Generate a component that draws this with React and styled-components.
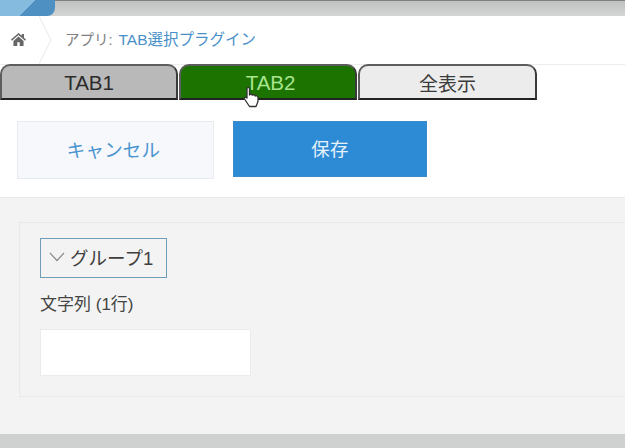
import React from "react";
import styled, { createGlobalStyle } from "styled-components";

const GlobalStyle = createGlobalStyle`
  html, body { margin: 0; padding: 0; background: #fff; }
  body { font-family: "Liberation Sans", "Noto Sans CJK JP", sans-serif; overflow: hidden; }
`;

const Page = styled.div`
  width: 625px;
  height: 448px;
  display: flex;
  flex-direction: column;
  overflow: hidden;
`;

const TopBar = styled.div`
  position: relative;
  height: 15px;
  flex: none;
  border-top: 1px solid #7c7f7f;
  background: linear-gradient(#bfc1c1, #d4d5d5);
`;

const Logo = styled.div`
  position: absolute;
  left: 0;
  top: -1px;
  width: 55px;
  height: 16px;
  border-radius: 0 0 8px 0;
  background: linear-gradient(135deg, #86bbe0 0 50%, #4f90c2 50% 100%);
`;

const Breadcrumb = styled.div`
  height: 49px;
  flex: none;
  display: flex;
  align-items: center;
  background: #fff;
  border-bottom: 1px solid #eceded;
  box-sizing: border-box;
`;

const HomeCell = styled.div`
  width: 39px;
  height: 100%;
  flex: none;
  display: flex;
  align-items: center;
  padding: 0 0 2px 11px;
  box-sizing: border-box;
`;

const Crumb = styled.svg`
  width: 14px;
  height: 48px;
  flex: none;
  margin-right: 12px;
`;

const AppLabel = styled.span`
  font-size: 14.5px;
  color: #808080;
  margin: 0 6px 4px 0;
`;

const AppLink = styled.span`
  font-size: 15.5px;
  color: #4a90c8;
  margin-bottom: 4px;
`;

const TabRow = styled.div`
  height: 36px;
  flex: none;
  display: flex;
  position: relative;
  margin-top: -1px;
`;

const Tab = styled.div`
  position: relative;
  width: ${(p) => p.$width}px;
  box-sizing: border-box;
  display: flex;
  align-items: center;
  justify-content: center;
  margin-left: ${(p) => p.$gap || 0}px;
  padding: 1px 0 0 ${(p) => p.$indent || 0}px;
  border: 2px solid #5d5d5d;
  border-bottom: 2px solid #222;
  border-right-color: #3a3a3a;
  border-radius: 10px 10px 0 0;
  background: ${(p) => p.$bg};
  color: ${(p) => p.$color};
  font-size: ${(p) => p.$size || 20.5}px;
`;

const Cursor = styled.svg`
  position: absolute;
  left: 62px;
  top: 20px;
  width: 18px;
  height: 22px;
`;

const Toolbar = styled.div`
  height: 97px;
  flex: none;
  display: flex;
  align-items: flex-start;
  gap: 19px;
  padding: 21px 0 0 17px;
  box-sizing: border-box;
  background: #fff;
`;

const Button = styled.div`
  width: ${(p) => p.$width}px;
  height: ${(p) => p.$height}px;
  box-sizing: border-box;
  display: flex;
  align-items: center;
  justify-content: center;
  font-size: 18.5px;
  letter-spacing: 0.2px;
  padding: 0 ${(p) => (p.$primary ? 0 : 4)}px 2px 0;
  background: ${(p) => (p.$primary ? "#2d8bd6" : "#f6f8fb")};
  color: ${(p) => (p.$primary ? "#e6f1fa" : "#4a94cf")};
  border: 1px solid ${(p) => (p.$primary ? "#3a8ccb" : "#e9ecef")};
`;

const Content = styled.div`
  flex: 1;
  background: #f3f3f3;
  border-top: 1px solid #ebebeb;
  padding: 24px 0 0 19px;
  box-sizing: border-box;
`;

const Panel = styled.div`
  height: 175px;
  box-sizing: border-box;
  border: 1px solid #e9e9e9;
  border-right: 0;
  padding: 15px 0 0 20px;
`;

const GroupToggle = styled.div`
  width: 127px;
  height: 40px;
  box-sizing: border-box;
  display: flex;
  align-items: center;
  gap: 5px;
  padding: 0 0 2px 8px;
  border: 1px solid #6f9cb8;
  font-size: 18.5px;
  color: #3f3f3f;
`;

const Chevron = styled.svg`
  width: 16px;
  height: 10px;
  flex: none;
`;

const FieldLabel = styled.div`
  margin-top: 17px;
  font-size: 17px;
  line-height: 20px;
  color: #444;
`;

const TextBox = styled.div`
  width: 211px;
  height: 47px;
  margin-top: 14px;
  box-sizing: border-box;
  background: #fff;
  border: 1px solid #ebebeb;
`;

const Footer = styled.div`
  height: 14px;
  flex: none;
  background: #cfd1d1;
`;

export default function App() {
  return (
    <Page>
      <GlobalStyle />
      <TopBar>
        <Logo />
      </TopBar>
      <Breadcrumb>
        <HomeCell>
          <svg width="15" height="15" viewBox="0 0 16 15">
            <path
              fill="#666"
              d="M8 0.5 L11.5 3.6 V1.5 H13.8 V5.6 L16 7.6 L15 8.7 L8 2.8 L1 8.7 L0 7.6 Z M2.6 9 L8 4.4 L13.4 9 V14.5 H9.3 V10.5 H6.7 V14.5 H2.6 Z"
            />
          </svg>
        </HomeCell>
        <Crumb viewBox="0 0 14 48">
          <path d="M0 0 L12 24 L0 48" fill="none" stroke="#e6e7e7" strokeWidth="1" />
        </Crumb>
        <AppLabel>アプリ:</AppLabel>
        <AppLink>TAB選択プラグイン</AppLink>
      </Breadcrumb>
      <TabRow>
        <Tab $width={178} $bg="#b9b9b9" $color="#2b2b2b">TAB1</Tab>
        <Tab $width={178} $gap={1} $indent={5} $bg="#1c7300" $color="#a8e58f">
          TAB2
          <Cursor viewBox="0 0 18 22">
            <path
              fill="#fff"
              stroke="#333"
              strokeWidth="1.3"
              strokeLinejoin="round"
              d="M4 2.5 C4 1 6.5 1 6.5 2.5 V9 C7 8 9 8 9.5 9.2 C10.5 8.4 12 8.8 12.3 10 C13.5 9.4 15 10 15 11.5 V15.5 L13 20.5 H6.5 L1.5 13 C1 11.5 2.5 10.5 4 12 Z"
            />
          </Cursor>
        </Tab>
        <Tab $width={179} $gap={1} $size={19} $bg="#ececec" $color="#3b3b3b">全表示</Tab>
      </TabRow>
      <Toolbar>
        <Button $width={197} $height={58}>キャンセル</Button>
        <Button $primary $width={194} $height={56}>保存</Button>
      </Toolbar>
      <Content>
        <Panel>
          <GroupToggle>
            <Chevron viewBox="0 0 16 10">
              <path d="M1 1 L8 8.5 L15 1" fill="none" stroke="#8b8b8b" strokeWidth="1.2" />
            </Chevron>
            グループ1
          </GroupToggle>
          <FieldLabel>文字列 (1行)</FieldLabel>
          <TextBox />
        </Panel>
      </Content>
      <Footer />
    </Page>
  );
}
